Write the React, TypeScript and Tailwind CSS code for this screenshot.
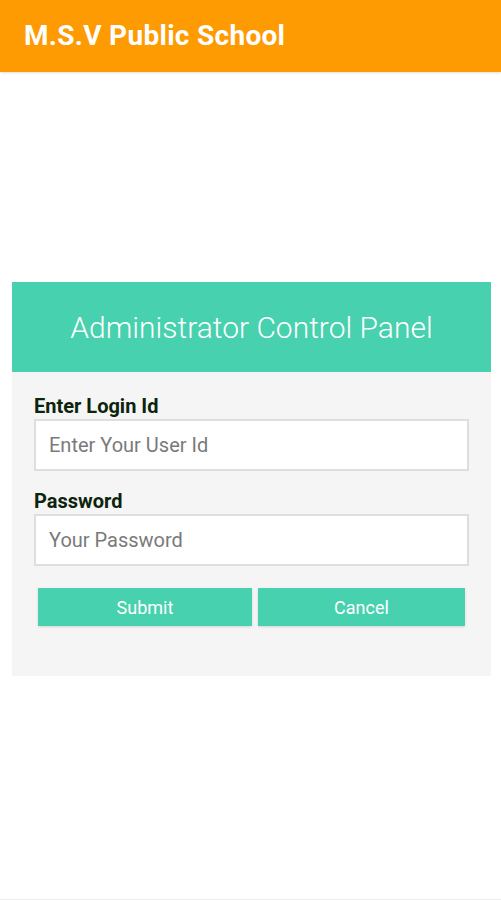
import React from "react";

const App: React.FC = () => {
  return (
    <div className="w-[501px] h-[900px] bg-white flex flex-col font-['Roboto',sans-serif] border-b border-[#ececec]">

      {/* App bar */}
      <div className="h-[72px] bg-[#fe9a02] flex items-center px-6 shadow-sm">
        <h1 className="text-white text-[28px] font-bold tracking-[0.3px]">
          M.S.V Public School
        </h1>
      </div>

      {/* Login card */}
      <div className="mt-[210px] ml-3 mr-[10px] bg-[#f5f5f5]">

        <div className="h-[90px] bg-[#47d1ae] flex items-center justify-center">
          <h2 className="text-white text-[30px] font-light">
            Administrator Control Panel
          </h2>
        </div>

        <div className="px-[22px] pt-[22px] pb-[50px]">

          <label className="block text-[20px] font-bold text-[#0c240c] leading-[24px]">
            Enter Login Id
          </label>
          <input
            className="mt-[1px] w-full h-[52px] bg-white border-2 border-[#dedede] px-[13px] text-[20px] text-[#333] placeholder:text-[#7a7a7a] outline-none"
            placeholder="Enter Your User Id"
          />

          <label className="block mt-[18px] text-[20px] font-bold text-[#0c240c] leading-[24px]">
            Password
          </label>
          <input
            type="password"
            className="mt-[1px] w-full h-[52px] bg-white border-2 border-[#dedede] px-[13px] text-[20px] text-[#333] placeholder:text-[#7a7a7a] outline-none"
            placeholder="Your Password"
          />

          <div className="flex gap-[6px] mt-[22px] px-[4px]">
            <button className="w-[214px] h-[38px] bg-[#47d1ae] text-white text-[18px] shadow-sm">
              Submit
            </button>
            <button className="flex-1 h-[38px] bg-[#47d1ae] text-white text-[18px] shadow-sm">
              Cancel
            </button>
          </div>

        </div>
      </div>

    </div>
  );
};

export default App;
